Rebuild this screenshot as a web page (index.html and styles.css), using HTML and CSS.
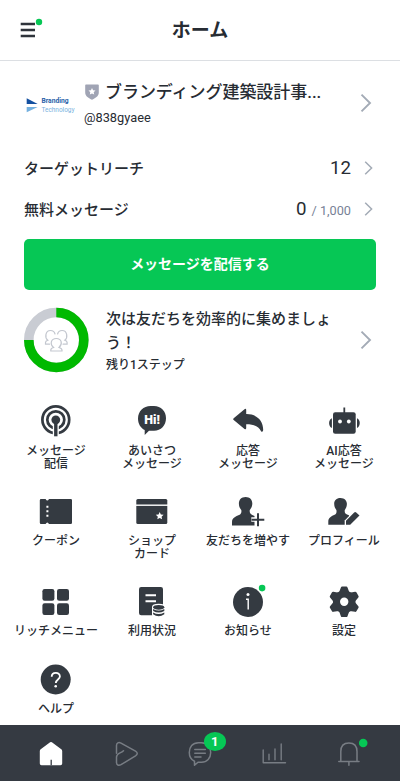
FILE: index.html
```html
<!DOCTYPE html>
<html lang="ja">
<head>
<meta charset="utf-8">
<title>ホーム</title>
<link rel="stylesheet" href="styles.css">
</head>
<body>
<header class="header">
  <svg class="menu" viewBox="0 0 26 26"><path d="M.7 9H15M.7 15H15M.7 21H15" stroke="#2f343b" stroke-width="2.3"/><circle cx="19" cy="7" r="3.2" fill="#06c755"/></svg>
  <h1 class="title">ホーム</h1>
</header>
<main class="main">
  <section class="profile">
    <svg class="logo" viewBox="0 0 52 24"><path d="M2.7 5.3 13.7 11H2.7z" fill="#1450a0"/><path d="M2.7 14H13.7L2.7 19.3z" fill="#74b0df"/><text x="17.5" y="10.4" textLength="27" lengthAdjust="spacingAndGlyphs" class="brand">Branding</text><text x="17.5" y="19" textLength="33" lengthAdjust="spacingAndGlyphs" class="tech">Technology</text></svg>
    <div class="account">
      <div class="name"><svg class="shield" viewBox="0 0 14 16"><path d="M1 .5H13Q13.8.5 13.8 1.3V8.5C13.8 12.5 10 14.2 7 15.8 4 14.2.2 12.5.2 8.5V1.3Q.2.5 1 .5z" fill="#a0a4b4"/><path d="M7 4l1.1 2.2 2.4.3-1.8 1.7.5 2.4L7 9.4l-2.2 1.2.5-2.4-1.8-1.7 2.4-.3z" fill="#fff"/></svg><span>ブランディング建築設計事...</span></div>
      <div class="id">@838gyaee</div>
    </div>
    <svg class="chev" viewBox="0 0 12 20"><path d="M1.5 1.6 10 10 1.5 18.4"/></svg>
  </section>
  <section class="stat reach"><span class="label">ターゲットリーチ</span><span class="num">12</span><svg class="chev small" viewBox="0 0 9 14"><path d="M1.2.7 7.6 7 1.2 13.3"/></svg></section>
  <section class="stat free"><span class="label">無料メッセージ</span><span class="num">0</span><span class="total">/ 1,000</span><svg class="chev small" viewBox="0 0 9 14"><path d="M1.2.7 7.6 7 1.2 13.3"/></svg></section>
  <button class="send">メッセージを配信する</button>
  <section class="step">
    <svg class="ring" viewBox="0 0 66 66"><g fill="none" stroke-width="9.6"><circle cx="32.3" cy="33" r="27.5" stroke="#c9ccd3"/><path d="M32.3 5.5A27.5 27.5 0 1 1 4.8 33" stroke="#00b900"/></g>
      <g fill="none" stroke="#c3c7cf" stroke-width="1.2" stroke-linecap="round"><path d="M25.5 37.2H21.5V35.5Q21.5 34 23.8 33.3C20.5 30.5 21.3 23.5 26.5 23.5 29 23.5 30.5 24.8 31 27"/><path d="M39.1 37.2H43.1V35.5Q43.1 34 40.8 33.3C44.1 30.5 43.3 23.5 38.1 23.5 35.6 23.5 34.1 24.8 33.6 27"/><path d="M29.6 40.5C25.5 37 27 31.5 32.3 31.5 37.6 31.5 39 37 35 40.5 36.5 41 38 41.5 38 43V44H26.8V43C26.8 41.5 28 41 29.6 40.5z"/></g></svg>
    <div class="steptext"><p class="next">次は友だちを効率的に集めましょう！</p><p class="left">残り1ステップ</p></div>
    <svg class="chev" viewBox="0 0 12 20"><path d="M1.5 1.6 10 10 1.5 18.4"/></svg>
  </section>
  <nav class="grid">
    <a class="item"><svg class="icon" viewBox="0 0 40 40"><g fill="none" stroke="#343a41"><circle cx="19.8" cy="18.8" r="13.4" stroke-width="2.7"/><circle cx="19.8" cy="18.8" r="8.5" stroke-width="2.7"/></g><path d="M19.8 20V36" stroke="#fff" stroke-width="6"/><circle cx="19.8" cy="18.8" r="4.4"/><path d="M19.8 19V35.3" stroke="#343a41" stroke-width="3.4"/></svg><span>メッセージ<br>配信</span></a>
    <a class="item"><svg class="icon" viewBox="0 0 40 40"><path d="M18.5 5H22C29 5 34 10 34 17.2S29 29.7 22 29.7H17L12.7 34V29C8.5 27 6 22.5 6 17.5 6 10 11.5 5 18.5 5z"/><text x="20" y="22.6" text-anchor="middle" class="hi">Hi!</text></svg><span>あいさつ<br>メッセージ</span></a>
    <a class="item"><svg class="icon" viewBox="0 0 40 40"><path d="M5.7 17.2 16.5 8.2Q18.2 7 18.2 9V13C27 12.8 35.2 18 35.2 29Q35 31.3 33.2 30.5C30.5 25.5 26 23.3 18.2 23.3V27Q18.2 29 16.5 28L5.7 19Q4.7 18.2 5.7 17.2z"/></svg><span>応答<br>メッセージ</span></a>
    <a class="item"><svg class="icon" viewBox="0 0 40 40"><path d="M20.3 6.5V12" stroke="#343a41" stroke-width="1.8"/><rect x="9" y="11.3" width="22.7" height="21.4" rx="2.2"/><path d="M7.9 17.3V27C4.2 25.5 4.2 18.8 7.9 17.3zM33 17.3V27C36.7 25.5 36.7 18.8 33 17.3z"/><g fill="#fff"><circle cx="16" cy="20.5" r="1.9"/><circle cx="24.8" cy="20.5" r="1.9"/></g></svg><span>AI応答<br>メッセージ</span></a>
    <a class="item"><svg class="icon" viewBox="0 0 40 40"><path d="M5 8H9.6Q11.3 11 13 8H34.8Q36 8 36 9.2V31.8Q36 33 34.8 33H13Q11.3 30 9.6 33H5Q3.8 33 3.8 31.8V9.2Q3.8 8 5 8z"/><path d="M11.4 14.8v2M11.4 19.3v2M11.4 23.8v2" stroke="#fff" stroke-width="2"/></svg><span>クーポン</span></a>
    <a class="item"><svg class="icon" viewBox="0 0 40 40"><rect x="4.3" y="8" width="31" height="25" rx="1.5"/><path d="M4 14.2H36" stroke="#fff" stroke-width="1.4"/><path d="M27.7 21l1.15 2.5 2.75.3-2.05 1.85.6 2.7-2.45-1.4-2.4 1.4.55-2.7-2.05-1.85 2.75-.3z" fill="#fff"/></svg><span>ショップ<br>カード</span></a>
    <a class="item"><svg class="icon" viewBox="0 0 40 40"><path d="M17.6 6C22 6 24.5 9 24.3 13 24.1 16 23 17.5 21.8 19 21.3 22 22.5 23.3 26.5 25V34.6H4V31C4 26.5 8 25.5 11 24 13.2 22.8 13.7 21.5 13.3 19 12 17.5 11 16 10.9 13 10.7 9 13.2 6 17.6 6z"/><path d="M30 21.8V35M23.3 28.5H37" stroke="#fff" stroke-width="4.6"/><path d="M30 22.2V35.2M23.5 28.7H36.3" stroke="#343a41" stroke-width="2"/></svg><span>友だちを増やす</span></a>
    <a class="item"><svg class="icon" viewBox="0 0 40 40"><path d="M16.5 7C20.8 7 23 10 22.9 13 22.8 16 21.8 17.5 20.8 19 20.3 22 21.5 23 25 24.3L27 33.8H4.3V30.5C4.3 26.5 7.6 25.3 10.6 23.8 12.4 22.8 12.8 21.5 12.4 19 11.2 17.5 10.3 16 10.2 13 10 10 12.2 7 16.5 7z"/><path d="M20.7 35.3V29.4L31.5 18.5 37.8 24.8 27.3 35.3z" fill="#fff"/><path d="M22 33.8V29.8L30.2 21.5Q31.2 20.5 32.2 21.5L35.5 24.5 26.2 33.8z"/></svg><span>プロフィール</span></a>
    <a class="item"><svg class="icon" viewBox="0 0 40 40"><rect x="6.4" y="8" width="12" height="11.8" rx="2.2"/><rect x="21" y="8" width="12" height="11.8" rx="2.2"/><rect x="6.4" y="22.2" width="12" height="11.8" rx="2.2"/><rect x="21" y="22.2" width="12" height="11.8" rx="2.2"/></svg><span>リッチメニュー</span></a>
    <a class="item"><svg class="icon" viewBox="0 0 40 40"><rect x="7" y="6" width="24" height="28.3" rx="2.2"/><path d="M13.5 14.3H24M13.5 20.3H24" stroke="#fff" stroke-width="2"/><path d="M20 26Q20 22.8 26.7 22.8T33.5 26V34Q33.5 37 26.7 37T20 34z" fill="#fff"/><ellipse cx="26.7" cy="26.3" rx="5.6" ry="2.4"/><path d="M21.1 28Q26.7 31 32.3 28V30Q26.7 33 21.1 30zM21.1 31.6Q26.7 34.6 32.3 31.6V33.3Q26.7 37.3 21.1 33.3z"/></svg><span>利用状況</span></a>
    <a class="item"><svg class="icon" viewBox="0 0 40 40"><circle cx="20" cy="21" r="15"/><circle cx="20" cy="13.6" r="1.5" fill="#fff"/><path d="M18 18.3H20.2V28.5" fill="none" stroke="#fff" stroke-width="1.4"/><circle cx="34.1" cy="7.1" r="3.3" fill="#06c755"/></svg><span>お知らせ</span></a>
    <a class="item"><svg class="icon" viewBox="0 0 40 40"><circle cx="20.2" cy="20.8" r="11.3"/><path id="t" d="M15 11.5 16.9 6.4Q17.2 5.5 18.1 5.5H22.3Q23.2 5.5 23.5 6.4L25.4 11.5zM15 30.1 16.9 35.2Q17.2 36.1 18.1 36.1H22.3Q23.2 36.1 23.5 35.2L25.4 30.1z"/><use href="#t" transform="rotate(60 20.2 20.8)"/><use href="#t" transform="rotate(120 20.2 20.8)"/><circle cx="20.2" cy="20.8" r="4.2" fill="#fff"/></svg><span>設定</span></a>
    <a class="item help"><svg class="icon" viewBox="0 0 40 40"><circle cx="19.7" cy="20.5" r="15"/><path d="M15.7 17.8C15.7 12.8 23.9 12.6 23.9 17.5 23.9 20.5 19.8 20.5 19.8 24" fill="none" stroke="#fff" stroke-width="1.8"/><circle cx="19.7" cy="27.2" r="1.3" fill="#fff"/></svg><span>ヘルプ</span></a>
  </nav>
</main>
<nav class="tabs">
  <a class="tab"><svg class="icon" viewBox="0 0 40 40"><path d="M19.1 9.3Q20 8.6 20.9 9.3L30.3 16.2Q31.2 16.9 31.2 18V30.5Q31.2 32.2 29.5 32.2H10.5Q8.8 32.2 8.8 30.5V18Q8.8 16.9 9.7 16.2z" fill="#fff"/><path d="M20.2 26.7V32.2" stroke="#353a42" stroke-width="1.3"/></svg></a>
  <a class="tab"><svg class="icon line" viewBox="0 0 40 40"><path d="M10.5 20.2V12.5C10.5 9.8 12.6 9 15 10.1L29.5 18.2Q33 20.4 29.5 22.8L15 31.7C12.6 33 10.5 32 10.5 29.5V24C10.5 20 14.5 20.5 17.5 17.7"/></svg></a>
  <a class="tab"><svg class="icon line" viewBox="0 0 40 40"><path d="M18.5 9.7H21.5C27.5 9.7 30.7 14 30.7 19.5S27 29.2 21.5 29.2H18L14.5 32.2V28.2C11 26.7 9.3 23.5 9.3 19.5 9.3 14 12.5 9.7 18.5 9.7zM14.8 16.5H25.3M14.8 20.2H25.3M14.8 24H21"/></svg><span class="badge">1</span></a>
  <a class="tab"><svg class="icon line" viewBox="0 0 40 40"><path d="M9.2 17V29.7H31.5M15 21.3V26.8M21 16V26.8M27.2 11V26.8" stroke-width="1.4"/></svg></a>
  <a class="tab"><svg class="icon line" viewBox="0 0 40 40"><path d="M9.8 28.5H30M11.8 28.5V18.5C11.8 12.5 15 9.9 19.9 9.9S28 12.5 28 18.5V28.5M19.9 28.5V32.3"/><circle cx="34.2" cy="10" r="4.3" fill="#06c755" stroke="none"/></svg></a>
</nav>
</body>
</html>
```
FILE: styles.css
```css
* { box-sizing: border-box; }
body {
  margin: 0;
  width: 400px;
  height: 781px;
  display: flex;
  flex-direction: column;
  overflow: hidden;
  background: #fff;
  color: #272c33;
  font-family: Roboto, "Noto Sans CJK JP", sans-serif;
  font-weight: 500;
}
p, h1 { margin: 0; }
svg { display: block; flex: none; overflow: visible; }
.header {
  height: 61px;
  border-bottom: 1px solid #dcdfe3;
  display: grid;
  grid-template-columns: 26px 1fr 26px;
  align-items: center;
  padding: 0 20px;
}
.menu { width: 26px; height: 26px; margin-top: -4px; }
.title { text-align: center; font-size: 19px; line-height: 28px; font-weight: 700; padding-top: 2px; }
.main { flex: 1; padding: 0 24px; }
.profile { display: flex; align-items: center; height: 84px; }
.logo { width: 52px; height: 24px; margin-top: 3px; }
.brand, .tech { font-size: 7.2px; fill: #2560a8; font-weight: 700; }
.tech { fill: #79b3e0; font-weight: 400; }
.account { margin-left: 9px; flex: 1; }
.name { display: flex; align-items: center; gap: 6px; font-size: 17px; line-height: 26px; white-space: nowrap; letter-spacing: -.05px; }
.shield { width: 14px; height: 16px; }
.id { font-size: 12.8px; line-height: 18px; margin: 4px 0 0 -1px; font-weight: 400; }
.chev { width: 12px; height: 20px; margin-right: 4px; fill: none; stroke: #a3abb6; stroke-width: 1.9; }
.small { width: 9px; height: 14px; margin: 0 3px 0 13px; stroke-width: 1.5; }
.stat { display: flex; align-items: center; height: 41px; font-size: 15px; }
.reach { margin-top: 2px; }
.label { flex: 1; }
.num { font-size: 18.7px; font-weight: 400; }
.total { font-size: 12.7px; color: #777f96; font-weight: 400; margin: 3px 0 0 5px; }
.send {
  display: block;
  width: 352px;
  height: 51px;
  margin-top: 10px;
  padding: 0 0 3px;
  border: 0;
  border-radius: 5px;
  background: #06c755;
  color: #fff;
  font: 700 14px "Noto Sans CJK JP", sans-serif;
}
.step { display: flex; align-items: center; height: 78px; margin-top: 11px; }
.ring { width: 66px; height: 66px; }
.steptext { width: 228px; margin: 2px 26px 0 16px; }
.next { font-size: 15px; line-height: 24px; }
.left { font-size: 12px; line-height: 20px; }
.grid { display: grid; grid-template-columns: repeat(4, 96px); margin: 22px -16px 0; row-gap: 20px; }
.item { display: flex; flex-direction: column; align-items: center; font-size: 12px; line-height: 13px; text-align: center; white-space: nowrap; }
.item span { margin-top: 4px; }
.help { margin-top: 1px; }
.icon { width: 40px; height: 40px; fill: #343a41; }
.hi { font: 900 12.5px Roboto, sans-serif; fill: #fff; }
.tabs { height: 56px; background: #353a42; display: flex; padding: 0 14px; }
.tab { flex: 1; display: flex; justify-content: center; align-items: center; position: relative; }
.line { fill: none; stroke: #787d84; stroke-width: 1.5; stroke-linecap: round; stroke-linejoin: round; }
.badge {
  position: absolute;
  left: 41px;
  top: 7px;
  width: 22px;
  height: 19px;
  border-radius: 50%;
  background: #06c755;
  color: #fff;
  font-size: 13px;
  line-height: 19px;
  font-weight: 700;
  text-align: center;
}
```
